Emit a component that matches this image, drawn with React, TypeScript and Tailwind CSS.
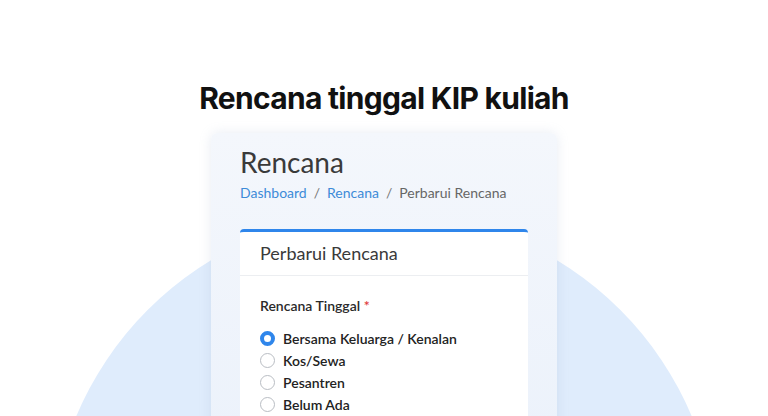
import React from "react";

function Radio({ checked }: { checked?: boolean }) {
  return checked ? (
    <span className="w-[15px] h-[15px] rounded-full border-[4.5px] border-[#2f86eb] bg-white shrink-0" />
  ) : (
    <span className="w-[15px] h-[15px] rounded-full border border-[#b9bdc3] bg-white shrink-0" />
  );
}

export default function App() {
  const options = ["Bersama Keluarga / Kenalan", "Kos/Sewa", "Pesantren", "Belum Ada"];
  return (
    <div className="relative w-full h-[416px] bg-white overflow-hidden" style={{ fontFamily: "Inter, sans-serif" }}>
      <div className="absolute left-[50px] top-[212px] w-[668px] h-[668px] rounded-full bg-[#dfecfc]" />
      <div className="relative flex flex-col items-center pt-[80px]">
        <h1 className="text-[30px] leading-[36px] font-bold text-[#111] tracking-[-0.7px]">Rencana tinggal KIP kuliah</h1>
        <div
          className="mt-[17px] w-[346px] h-[300px] rounded-md bg-gradient-to-b from-[#f4f7fc] to-[#ecf2fb] shadow-[0_0_12px_rgba(150,170,200,0.22)] pl-[29px] pr-[29px] pt-[13px]"
          style={{ fontFamily: "Lato, 'Open Sans', sans-serif" }}
        >
          <div className="text-[28px] leading-[32px] text-[#3a3a3a]">Rencana</div>
          <div className="mt-[5px] text-[14px] leading-[20px] flex gap-[7px]">
            <span className="text-[#3d8bd8]">Dashboard</span>
            <span className="text-[#777]">/</span>
            <span className="text-[#3d8bd8]">Rencana</span>
            <span className="text-[#777]">/</span>
            <span className="text-[#666]">Perbarui Rencana</span>
          </div>
          <div className="mt-[26px] bg-white rounded-t-[4px] border-t-[3px] border-[#2f86eb] h-[200px]">
            <div className="h-[44px] flex items-center px-[20px] border-b border-[#eceef1] text-[18px] text-[#3a3a3a]">
              Perbarui Rencana
            </div>
            <div className="px-[20px] pt-[20px]">
              <div className="text-[14px] leading-[20px] font-semibold text-[#2a2a2a]">
                Rencana Tinggal <span className="text-[#e03b3b]">*</span>
              </div>
              <div className="mt-[11px] flex flex-col">
                {options.map((o, i) => (
                  <div key={o} className="flex items-center gap-[8px] h-[22px]">
                    <Radio checked={i === 0} />
                    <span className="text-[14px] font-semibold text-[#222]">{o}</span>
                  </div>
                ))}
              </div>
            </div>
          </div>
        </div>
      </div>
    </div>
  );
}
